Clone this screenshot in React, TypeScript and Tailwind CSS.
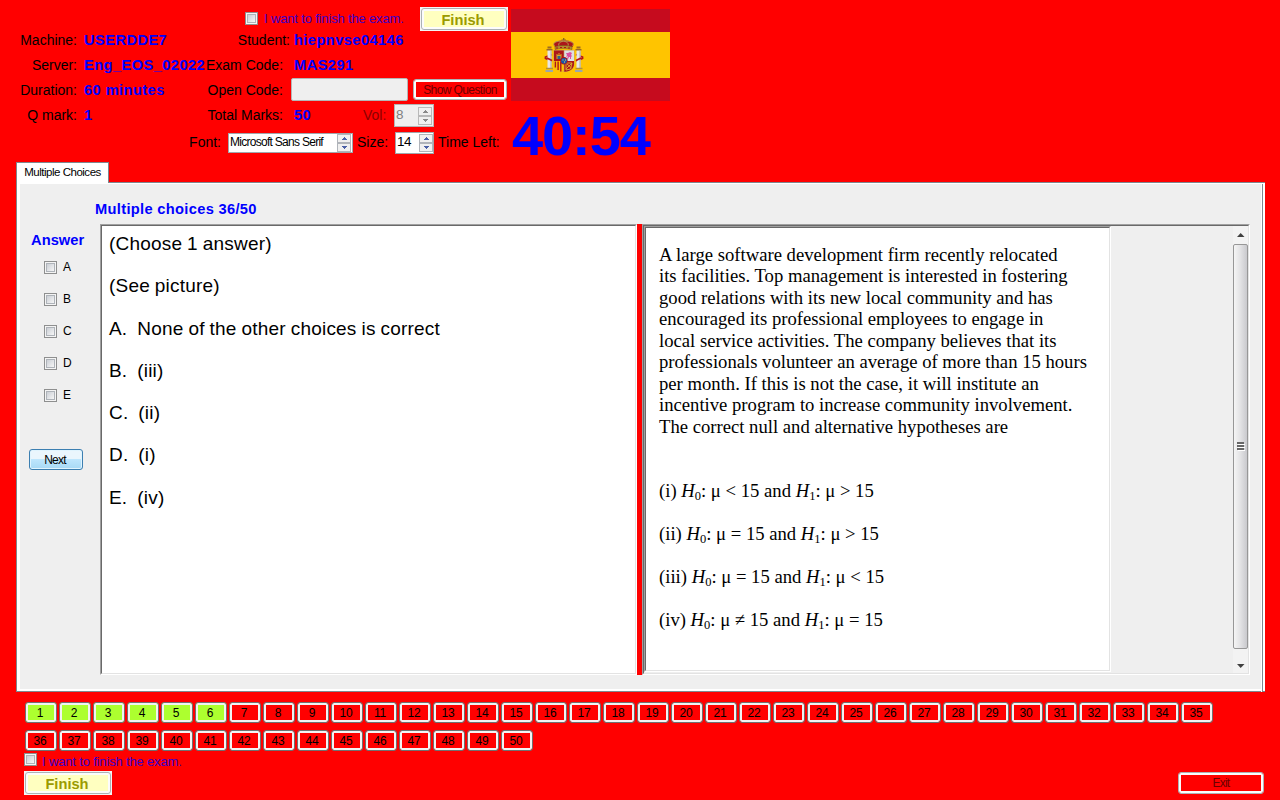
import React from "react";

const answers = ["A", "B", "C", "D", "E"];

const choices = [
  "(Choose 1 answer)",
  "(See picture)",
  "A.  None of the other choices is correct",
  "B.  (iii)",
  "C.  (ii)",
  "D.  (i)",
  "E.  (iv)",
];

const passage = [
  "A large software development firm recently relocated",
  "its facilities. Top management is interested in fostering",
  "good relations with its new local community and has",
  "encouraged its professional employees to engage in",
  "local service activities. The company believes that its",
  "professionals volunteer an average of more than 15 hours",
  "per month. If this is not the case, it will institute an",
  "incentive program to increase community involvement.",
  "The correct null and alternative hypotheses are",
];

const hypotheses = [
  ["(i)", "<", ">"],
  ["(ii)", "=", ">"],
  ["(iii)", "=", "<"],
  ["(iv)", "≠", "="],
];

function CheckBox() {
  return (
    <span className="block h-[13px] w-[13px] shrink-0 border border-[#8e8f8f] bg-[#f4f4f4] p-px">
      <span className="block h-[9px] w-[9px] border border-[#aeb3b9] bg-linear-to-br from-[#cbcfd5] to-[#f6f6f6]" />
    </span>
  );
}

function Arrows({ color, line }: { color: string; line: string }) {
  return (
    <svg width="14" height="18" viewBox="0 0 14 18" className="shrink-0" shapeRendering="crispEdges">
      <rect x="0.5" y="0.5" width="13" height="8" fill="#f0f0f0" stroke={line} />
      <rect x="0.5" y="9.5" width="13" height="8" fill="#f0f0f0" stroke={line} />
      <path d="M4 6h6L7 3z" fill={color} />
      <path d="M4 12h6L7 15z" fill={color} />
    </svg>
  );
}

function FinishButton() {
  return (
    <button className="flex h-6 w-[88px] shrink-0 border border-[#f4f4f4] bg-[#f4f4f4]">
      <span className="flex h-[22px] w-[86px] items-center justify-center rounded-[3px] border border-[#adb2b5] bg-[#fcfcfc] p-[2px]">
        <span className="flex h-full w-full items-center justify-center bg-[#ffffc0] pt-[2px] pr-[2px] text-[14.67px] leading-none font-bold text-[#9b9b00]">
          Finish
        </span>
      </span>
    </button>
  );
}

function FinishCheck() {
  return (
    <span className="block text-[13px] leading-[15px] tracking-[-0.16px] whitespace-pre text-[#3a00c8]">
      I want to finish the exam.
    </span>
  );
}

function Label({ children }: { children: React.ReactNode }) {
  return <span className="block pb-[2px] text-[14px] leading-5">{children}</span>;
}

function Value({ children }: { children: React.ReactNode }) {
  return (
    <span className="block pb-px text-[14.67px] leading-5 font-bold tracking-[0.42px] text-[#0000ff]">
      {children}
    </span>
  );
}

function Flag() {
  return (
    <svg width="159" height="92" viewBox="0 0 159 92">
      <rect width="159" height="92" fill="#c60b1e" />
      <rect y="23" width="159" height="46" fill="#ffc400" />
      <g transform="translate(33 29)">
        <path d="M19 0h1.4v1.5H22v1h-1.6V5H19V2.500h-1.600v-1H19z" fill="#8c6a1c" />
        <path d="M11 9c-4-5 3-6.500 9-6.500S32 4 28.500 9z" fill="#ad1519" />
        <path d="M10.500 8c-3-4 3-5 9-5s12 1 9 5M15 8c-1-3 1-4 4.500-5 3.500 1 5.500 2 4.500 5" fill="none" stroke="#b99a50" strokeWidth="1" />
        <path d="M11 8.500c5-1.500 12-1.500 17 0v3c-5-1.200-12-1.200-17 0z" fill="#b28c2e" stroke="#6e4a1c" strokeWidth=".5" />
        <path d="M12 10h2m2-.5h2m2 0h2m2 .5h2" stroke="#ad1519" strokeWidth="1.200" />
        <path d="M9.500 12h21v13c0 12-21 12-21 0z" fill="#c7a05a" />
        <path d="M10 12.500h9.700V23H10z" fill="#ad1519" />
        <path d="M20.300 12.500H30V23h-9.700z" fill="#dedfe3" />
        <path d="M10 23h9.700v10.800C13 33.500 10 30 10 25z" fill="#ffc400" />
        <path d="M11.400 23.500v6m2.700-6v8.500m2.700-8.500v10" stroke="#ad1519" strokeWidth="1.400" />
        <path d="M20.300 23H30v3c0 4-3 7.500-9.700 7.800z" fill="#ad1519" />
        <path d="M22 25h6l-1.500 6L22 32zM22 25l5.500 5M28 25l-6 6" fill="none" stroke="#d9a62f" strokeWidth="1" />
        <path d="M12.500 21v-5h1v1h1v-2h1v2h1v-1h1v5z" fill="#d3a52d" />
        <path d="M13.500 18h3v3h-3z" fill="#345f8b" />
        <path d="M22 15h2l2-1 2 1-1 2 1 1-1 1v2h-1v-2h-1l-1 2h-1l1-3-2 1 1-2z" fill="#db4fa0" />
        <circle cx="20" cy="22.800" r="3.700" fill="#ad1519" />
        <circle cx="20" cy="22.800" r="2.900" fill="#1456ad" />
        <path d="M18.500 22h1m1.500 0h1m-2 2h1" stroke="#ffd04a" strokeWidth="1" />
        <path d="M8 16.500L1.500 19v1.500L8 23M32 16.500l6.500 2.500v1.500L32 23" fill="none" stroke="#b4161b" strokeWidth="1.800" />
        <path d="M3.500 12h4v19h-4zM32.500 12h4v19h-4z" fill="#e6e6e8" />
        <path d="M7 13v17M36 13v17" stroke="#a7a8ad" />
        <path d="M3 20l5 2.500M37 20l-5 2.500" stroke="#b4161b" strokeWidth="1.800" />
        <path d="M2.500 11h6v1.500h-6zM31.500 11h6v1.500h-6zM3.500 8.500h4v2h-4zM32.500 8.500h4v2h-4z" fill="#9b6b22" />
        <path d="M2 30.500h7M31.500 30.500h7" stroke="#b18f3a" strokeWidth="1.500" />
        <path d="M1.500 33h7.500M31 33h7.500" stroke="#9aa7ad" strokeWidth="2.200" />
      </g>
    </svg>
  );
}

function Header() {
  return (
    <header className="flex h-[162px] w-full">
      <div className="w-[511px] shrink-0 whitespace-nowrap">
        <div className="flex h-7 pt-[7px]">
          <div className="ml-[245px] flex w-[175px] gap-1.5 pt-[5px]">
            <CheckBox />
            <div className="-mt-px">
              <FinishCheck />
            </div>
          </div>
          <FinishButton />
        </div>
        <div className="flex h-[25px] items-center">
          <div className="w-[77px] text-right"><Label>Machine:</Label></div>
          <div className="ml-[7px] w-[130px]"><Value>USERDDE7</Value></div>
          <div className="w-[76px] text-right"><Label>Student:</Label></div>
          <div className="ml-1"><Value>hiepnvse04146</Value></div>
        </div>
        <div className="flex h-[25px] items-center">
          <div className="w-[77px] text-right"><Label>Server:</Label></div>
          <div className="ml-[7px] w-[122px]"><Value>Eng_EOS_02022</Value></div>
          <div className="w-[77px] text-right"><Label>Exam Code:</Label></div>
          <div className="ml-[11px]"><Value>MAS291</Value></div>
        </div>
        <div className="flex h-[25px] items-center">
          <div className="w-[77px] text-right"><Label>Duration:</Label></div>
          <div className="ml-[7px] w-[122px]"><Value>60 minutes</Value></div>
          <div className="w-[77px] text-right"><Label>Open Code:</Label></div>
          <div className="mb-[2px] ml-2 h-[23px] w-[117px] rounded-[2px] border border-[#b5b5b5] bg-[#efefef]" />
          <div className="mb-[2px] ml-[5px] flex h-[21px] w-[94px] items-center justify-center rounded-[3px] border border-[#adb2b5] bg-[#ff0000] text-[12px] tracking-[-0.6px] text-[#6b0000] inset-ring-2 inset-ring-[#fcfcfc]">
            Show Question
          </div>
        </div>
        <div className="flex h-[25px] items-center">
          <div className="w-[77px] text-right"><Label>Q mark:</Label></div>
          <div className="ml-[7px] w-[119px]"><Value>1</Value></div>
          <div className="w-20 text-right"><Label>Total Marks:</Label></div>
          <div className="ml-[11px] w-[69px]"><Value>50</Value></div>
          <div className="w-[31px] text-[#8b0000]"><Label>Vol:</Label></div>
          <div className="flex h-[23px] w-10 items-center justify-between border border-[#b4b4b4] bg-[#efefef] pr-px pl-px text-[13.500px] text-[#808080]">
            <span className="block pb-px">8</span>
            <Arrows color="#8a8a8a" line="#b9b9b9" />
          </div>
        </div>
        <div className="flex h-[29px] items-center">
          <div className="w-[221px] text-right"><Label>Font:</Label></div>
          <div className="ml-[7px] flex h-5 w-[125px] items-center justify-between border border-[#a0a7ad] bg-white pr-px pl-px text-[12px] tracking-[-0.72px]">
            <span className="block pb-px">Microsoft Sans Serif</span>
            <Arrows color="#4a5fa5" line="#b0b4ba" />
          </div>
          <div className="ml-1 w-[38px]"><Label>Size:</Label></div>
          <div className="flex h-[22px] w-[39px] items-center justify-between border border-[#a0a7ad] bg-white pl-px text-[13.500px] tracking-[-0.4px]">
            <span>14</span>
            <Arrows color="#4a5fa5" line="#b0b4ba" />
          </div>
          <div className="ml-1"><Label>Time Left:</Label></div>
        </div>
      </div>
      <div className="pt-[9px]">
        <Flag />
        <div className="mt-[5px] pl-px text-[56px] leading-[60px] font-bold tracking-[-1.1px] text-[#0000ff]">40:54</div>
      </div>
    </header>
  );
}

function ScrollBar() {
  return (
    <div className="ml-auto flex h-full w-[15px] flex-col items-center bg-[#f3f3f3]">
      <svg width="15" height="18" viewBox="0 0 15 18"><path d="M4 11h7.500L7.700 7z" fill="#404040" /></svg>
      <div className="flex h-[405px] w-[15px] items-center justify-center rounded-[2px] border border-[#979797] bg-linear-to-r from-[#f5f5f5] via-[#e2e2e4] to-[#c9c9cd]">
        <svg width="8" height="9" viewBox="0 0 8 9" shapeRendering="crispEdges">
          <path d="M0 1h7M0 4h7M0 7h7" stroke="#666" strokeWidth="1.500" />
          <path d="M1 2.500h7M1 5.500h7M1 8.500h7" stroke="#fff" />
        </svg>
      </div>
      <svg width="15" height="24" viewBox="0 0 15 24"><path d="M4 15h7.500L7.700 19z" fill="#404040" /></svg>
    </div>
  );
}

function QuestionPanel() {
  return (
    <section className="flex h-[510px] w-[1249px] border-t border-b border-l border-[#7f878f] bg-white pt-px pb-[2px] pl-[3px]">
      <div className="flex h-full w-[1241px] flex-col bg-[#efefef]">
        <div className="h-10 pt-[17px] pl-[75px] text-[14.67px] leading-[17px] font-bold tracking-[0.32px] text-[#0000ff]">
          Multiple choices 36/50
        </div>
        <div className="flex">
          <aside className="w-20 shrink-0">
            <div className="pt-2 pl-[11px] text-[14.67px] leading-[17px] font-bold tracking-[0.05px] text-[#0000ff]">
              Answer
            </div>
            <div className="mt-3 flex flex-col gap-[19px] pl-6">
              {answers.map((a) => (
                <div key={a} className="flex h-[13px] items-center gap-[6px] text-[12px]">
                  <CheckBox />
                  <span className="block pb-px">{a}</span>
                </div>
              ))}
            </div>
            <button className="mt-[47px] ml-[9px] flex h-[21px] w-[54px] items-center justify-center rounded-[3px] border border-[#3c7fb1] bg-linear-to-b from-[#eaf6fd] from-50% via-[#bee6fd] via-50% to-[#a7d9f5] pr-[2px] text-[12px] tracking-[-0.75px] inset-ring-1 inset-ring-[#e0f4fe]">
              Next
            </button>
          </aside>
          <div className="h-[451px] w-[537px] border border-t-[#a0a0a0] border-r-white border-b-white border-l-[#a0a0a0]">
            <div className="h-full border border-t-[#696969] border-r-[#e3e3e3] border-b-[#e3e3e3] border-l-[#696969] bg-white pl-[7px] text-[19px] leading-[42.250px] tracking-[0.19px] [word-spacing:-0.5px] whitespace-pre">
              <div className="-mt-[3px]">
                {choices.map((c) => (
                  <div key={c}>{c}</div>
                ))}
              </div>
            </div>
          </div>
          <div className="h-[451px] w-[5px] bg-[#ff0000]" />
          <div className="h-[451px] w-[608px] border border-t-[#a0a0a0] border-r-white border-b-white border-l-[#a0a0a0]">
            <div className="flex h-full border border-t-[#696969] border-r-[#e3e3e3] border-b-[#e3e3e3] border-l-[#696969]">
              <div className="h-[446px] w-[467px] border border-t-[#a0a0a0] border-r-white border-b-white border-l-[#a0a0a0]">
                <div className="h-full border border-t-[#696969] border-r-[#e3e3e3] border-b-[#e3e3e3] border-l-[#696969] bg-white pt-4 pl-[13px] font-['Liberation_Serif','Times_New_Roman',serif] text-[18.67px] leading-[21.450px] whitespace-nowrap">
                  {passage.map((line) => (
                    <div key={line}>{line}</div>
                  ))}
                  <div className="mt-[43px] flex flex-col gap-[21.500px]">
                    {hypotheses.map(([n, a, b]) => (
                      <div key={n} className="h-[21.500px]">
                        {n} <i>H</i>
                        <sub className="text-[12.500px] leading-none">0</sub>: μ {a} 15 and <i>H</i>
                        <sub className="text-[12.500px] leading-none">1</sub>: μ {b} 15
                      </div>
                    ))}
                  </div>
                </div>
              </div>
              <ScrollBar />
            </div>
          </div>
        </div>
      </div>
      <div className="-mb-[2px] h-[508px] w-[2px] border-r border-[#7f878f] bg-white" />
    </section>
  );
}

function NumberButton({ n }: { n: number }) {
  return (
    <button
      className={
        "flex h-[21px] w-8 items-center justify-center rounded-[3px] border border-[#707070] pr-[2px] text-[12px] tracking-[-0.2px] inset-ring-2 inset-ring-[#f2f2f2] " +
        (n <= 6 ? "bg-[#adff2f]" : "bg-[#ff0000]")
      }
    >
      {n}
    </button>
  );
}

export default function App() {
  return (
    <main className="flex h-[800px] w-[1280px] flex-col overflow-hidden bg-[#ff0000] font-['Liberation_Sans',Arial,sans-serif] text-black">
      <Header />
      <div className="flex flex-col pl-4">
        <div className="z-10 -mb-px flex h-[21px] w-[93px] items-center justify-center border border-b-0 border-[#7f878f] bg-white text-[11.500px] tracking-[-0.48px] whitespace-nowrap">
          Multiple Choices
        </div>
        <QuestionPanel />
      </div>
      <div className="mt-[10px] flex w-[1220px] flex-wrap gap-x-[2px] gap-y-[7px] pl-[25px]">
        {Array.from({ length: 50 }, (_, i) => (
          <NumberButton key={i} n={i + 1} />
        ))}
      </div>
      <footer className="mt-[2px] flex justify-between pr-4 pl-6">
        <div>
          <div className="flex gap-[5px]">
            <CheckBox />
            <div className="pt-px">
              <FinishCheck />
            </div>
          </div>
          <div className="mt-[2px]">
            <FinishButton />
          </div>
        </div>
        <button className="mt-[19px] flex h-[22px] w-[86px] items-center justify-center rounded-[3px] border border-[#adb2b5] text-[12px] tracking-[-0.8px] text-[#6b0000] inset-ring-2 inset-ring-[#fcfcfc]">
          Exit
        </button>
      </footer>
    </main>
  );
}
